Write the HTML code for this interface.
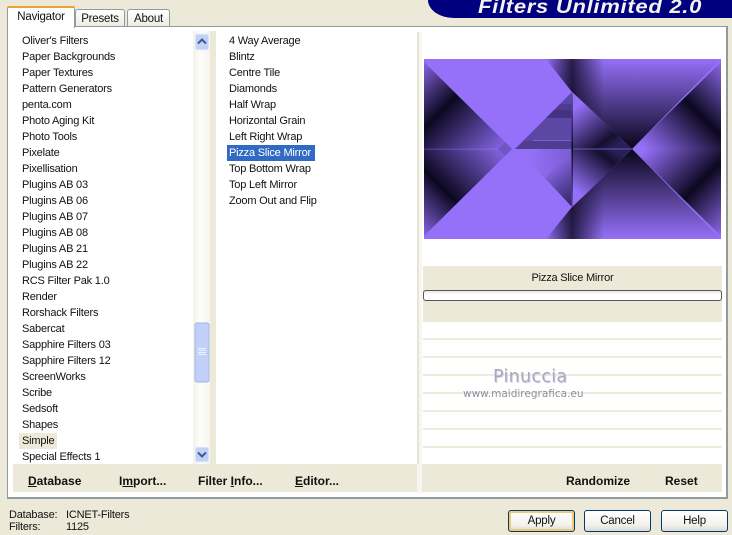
<!DOCTYPE html>
<html><head><meta charset="utf-8"><style>
html,body{margin:0;padding:0}
body{width:732px;height:535px;overflow:hidden;background:#ece9d8;position:relative;font-family:"Liberation Sans",sans-serif;font-size:11px;letter-spacing:-.2px;color:#111}
.a{position:absolute}
.r{position:absolute;white-space:nowrap;line-height:16px;height:16px}
.b{position:absolute;font-weight:bold;font-size:12px;letter-spacing:0;white-space:nowrap;line-height:16px;top:474px}
.l{position:absolute;left:423px;width:299px;height:2px;background:#efecdf}
.btn{position:absolute;top:510px;width:65px;height:20px;border:1px solid #003c74;border-radius:3px;background:linear-gradient(#fff,#f3f2ec 70%,#dcd8cc);text-align:center;line-height:20px;font-size:11.5px}
.tab{position:absolute;border:1px solid #919b9c;border-bottom:0;border-radius:3px 3px 0 0;background:linear-gradient(#fff,#ecebe0);text-align:center;font-size:11.5px}
</style></head><body>
<div class="a" style="left:428px;top:0;width:304px;height:18px;background:#00007f;border-radius:0 0 0 26px/0 0 0 18px"></div>
<div class="a" style="left:478px;top:-2px;font:italic bold 19px/20px 'Liberation Sans',sans-serif;color:#f4f4ee;white-space:nowrap;transform-origin:0 0;transform:scaleX(1.16);letter-spacing:.6px">Filters Unlimited 2.0</div>

<div class="tab" style="left:75px;top:9px;width:48px;height:17px;line-height:18px">Presets</div>
<div class="tab" style="left:127px;top:9px;width:41px;height:17px;line-height:18px">About</div>

<div class="a" style="left:7px;top:26px;width:718px;height:470px;border:1px solid #919b9c;border-right:2px solid #919b9c;border-bottom:2px solid #919b9c;background:#fff"></div>
<div class="a" style="left:7px;top:6px;width:66px;height:21px;background:#fff;border:1px solid #919b9c;border-bottom:0;border-radius:3px 3px 0 0;text-align:center;line-height:21px;font-size:11.5px"><div class="a" style="left:-1px;right:-1px;top:-1px;height:2px;background:#f0a030;border-radius:3px 3px 0 0"></div>Navigator</div>

<div class="a" style="left:210px;top:31px;width:6px;height:433px;background:#ece9d8"></div>
<div class="a" style="left:13px;top:464px;width:404px;height:28px;background:#ece9d8"></div>
<div class="a" style="left:422px;top:464px;width:300px;height:28px;background:#ece9d8"></div>
<div class="a" style="left:417px;top:32px;width:2px;height:432px;background:#e8e5d5"></div>
<div class="a" style="left:419px;top:32px;width:3px;height:461px;background:#f7f6f0"></div>
<div class="a" style="left:417px;top:464px;width:2px;height:29px;background:#f7f6f0"></div>

<div class="a" style="left:19px;top:433px;width:38px;height:16px;background:#ece9d8"></div>
<div class="a" style="left:227px;top:145px;width:88px;height:16px;background:#316ac5"></div>

<div class="r" style="left:22px;top:33px">Oliver's Filters</div>
<div class="r" style="left:22px;top:49px">Paper Backgrounds</div>
<div class="r" style="left:22px;top:65px">Paper Textures</div>
<div class="r" style="left:22px;top:81px">Pattern Generators</div>
<div class="r" style="left:22px;top:97px">penta.com</div>
<div class="r" style="left:22px;top:113px">Photo Aging Kit</div>
<div class="r" style="left:22px;top:129px">Photo Tools</div>
<div class="r" style="left:22px;top:145px">Pixelate</div>
<div class="r" style="left:22px;top:161px">Pixellisation</div>
<div class="r" style="left:22px;top:177px">Plugins AB 03</div>
<div class="r" style="left:22px;top:193px">Plugins AB 06</div>
<div class="r" style="left:22px;top:209px">Plugins AB 07</div>
<div class="r" style="left:22px;top:225px">Plugins AB 08</div>
<div class="r" style="left:22px;top:241px">Plugins AB 21</div>
<div class="r" style="left:22px;top:257px">Plugins AB 22</div>
<div class="r" style="left:22px;top:273px">RCS Filter Pak 1.0</div>
<div class="r" style="left:22px;top:289px">Render</div>
<div class="r" style="left:22px;top:305px">Rorshack Filters</div>
<div class="r" style="left:22px;top:321px">Sabercat</div>
<div class="r" style="left:22px;top:337px">Sapphire Filters 03</div>
<div class="r" style="left:22px;top:353px">Sapphire Filters 12</div>
<div class="r" style="left:22px;top:369px">ScreenWorks</div>
<div class="r" style="left:22px;top:385px">Scribe</div>
<div class="r" style="left:22px;top:401px">Sedsoft</div>
<div class="r" style="left:22px;top:417px">Shapes</div>
<div class="r" style="left:22px;top:433px">Simple</div>
<div class="r" style="left:22px;top:449px">Special Effects 1</div>

<div class="r" style="left:229px;top:33px">4 Way Average</div>
<div class="r" style="left:229px;top:49px">Blintz</div>
<div class="r" style="left:229px;top:65px">Centre Tile</div>
<div class="r" style="left:229px;top:81px">Diamonds</div>
<div class="r" style="left:229px;top:97px">Half Wrap</div>
<div class="r" style="left:229px;top:113px">Horizontal Grain</div>
<div class="r" style="left:229px;top:129px">Left Right Wrap</div>
<div class="r" style="left:229px;top:145px;color:#fff">Pizza Slice Mirror</div>
<div class="r" style="left:229px;top:161px">Top Bottom Wrap</div>
<div class="r" style="left:229px;top:177px">Top Left Mirror</div>
<div class="r" style="left:229px;top:193px">Zoom Out and Flip</div>

<!-- scrollbar -->
<div class="a" style="left:193px;top:31px;width:17px;height:433px;background:linear-gradient(90deg,#f3f1e8,#fdfdfa 40%,#f6f5ee)"></div>
<svg class="a" style="left:193px;top:31px" width="17" height="433" viewBox="0 0 17 433">
<rect x="2" y="3" width="14" height="16" rx="2" fill="#c1d2f8" stroke="#eef3fe"/>
<path d="M5 12.500L9 8.500L13 12.500" fill="none" stroke="#3f5a8c" stroke-width="2"/>
<rect x="2" y="292" width="14" height="59" rx="2" fill="#c0d0f8" stroke="#9fb6ea"/>
<path d="M5 317.500h8M5 319.500h8M5 321.500h8M5 323.500h8" stroke="#eef3fe" stroke-width="1"/>
<rect x="2" y="416" width="14" height="15" rx="2" fill="#c1d2f8" stroke="#eef3fe"/>
<path d="M5 421.500L9 425.500L13 421.500" fill="none" stroke="#3f5a8c" stroke-width="2"/>
</svg>

<!-- preview image -->
<svg class="a" style="left:424px;top:59px" width="297" height="180" viewBox="424 59 297 180">
<defs>
<linearGradient id="lu" gradientUnits="userSpaceOnUse" x1="505" y1="149" x2="420" y2="64"><stop offset="0" stop-color="#8a68e8"/><stop offset=".2" stop-color="#5f49a8"/><stop offset=".6" stop-color="#0c0820"/><stop offset="1" stop-color="#8a68e8"/></linearGradient>
<linearGradient id="ld" gradientUnits="userSpaceOnUse" x1="505" y1="149" x2="420" y2="234"><stop offset="0" stop-color="#8a68e8"/><stop offset=".2" stop-color="#5f49a8"/><stop offset=".6" stop-color="#0c0820"/><stop offset="1" stop-color="#8a68e8"/></linearGradient>
<linearGradient id="ru" gradientUnits="userSpaceOnUse" x1="645" y1="149" x2="726" y2="68"><stop offset="0" stop-color="#9570f8"/><stop offset=".55" stop-color="#0c0820"/><stop offset="1" stop-color="#8a68e8"/></linearGradient>
<linearGradient id="rd" gradientUnits="userSpaceOnUse" x1="645" y1="149" x2="726" y2="230"><stop offset="0" stop-color="#9570f8"/><stop offset=".55" stop-color="#0c0820"/><stop offset="1" stop-color="#8a68e8"/></linearGradient>
<linearGradient id="tv" gradientUnits="userSpaceOnUse" x1="0" y1="59" x2="0" y2="146"><stop offset="0" stop-color="#9570f8"/><stop offset="1" stop-color="#0c0820"/></linearGradient>
<linearGradient id="bv" gradientUnits="userSpaceOnUse" x1="0" y1="239" x2="0" y2="152"><stop offset="0" stop-color="#9570f8"/><stop offset="1" stop-color="#0c0820"/></linearGradient>
<linearGradient id="hd" gradientUnits="userSpaceOnUse" x1="546" y1="0" x2="604" y2="0"><stop offset="0" stop-color="#0c0820" stop-opacity="0"/><stop offset=".45" stop-color="#0c0820" stop-opacity=".8"/><stop offset="1" stop-color="#0c0820" stop-opacity="0"/></linearGradient>
<linearGradient id="mu" gradientUnits="userSpaceOnUse" x1="578" y1="106" x2="612" y2="150"><stop offset="0" stop-color="#9570f8"/><stop offset=".8" stop-color="#14102e"/><stop offset="1" stop-color="#2a2058"/></linearGradient>
<linearGradient id="md" gradientUnits="userSpaceOnUse" x1="578" y1="192" x2="612" y2="148"><stop offset="0" stop-color="#9570f8"/><stop offset=".8" stop-color="#14102e"/><stop offset="1" stop-color="#2a2058"/></linearGradient>
<linearGradient id="ll" gradientUnits="userSpaceOnUse" x1="552" y1="168" x2="572" y2="205"><stop offset="0" stop-color="#2a2058" stop-opacity="0"/><stop offset="1" stop-color="#2a2058" stop-opacity=".9"/></linearGradient>
<linearGradient id="ls" gradientUnits="userSpaceOnUse" x1="530" y1="0" x2="572" y2="0"><stop offset="0" stop-color="#9570f8"/><stop offset="1" stop-color="#7a5cd0"/></linearGradient>
<linearGradient id="vl" x1="0" y1="0" x2="0" y2="1"><stop offset="0" stop-color="#6a55bc"/><stop offset=".5" stop-color="#0c0820"/><stop offset="1" stop-color="#6a55bc"/></linearGradient>
<linearGradient id="cl" gradientUnits="userSpaceOnUse" x1="424" y1="0" x2="505" y2="0"><stop offset="0" stop-color="#5c48a8" stop-opacity=".5"/><stop offset="1" stop-color="#9570f8" stop-opacity=".6"/></linearGradient>
</defs>
<rect x="424" y="59" width="297" height="180" fill="#9570f8"/>
<polygon points="530,149 572,149 572,207 530,163" fill="url(#ls)"/>
<polygon points="424,62 512,149 424,149" fill="url(#lu)"/>
<polygon points="424,236 512,149 424,149" fill="url(#ld)"/>
<polygon points="632,149 721,62 721,149" fill="url(#ru)"/>
<polygon points="632,149 721,236 721,149" fill="url(#rd)"/>
<polygon points="546,59 721,59 632,149 572,92" fill="url(#tv)"/>
<polygon points="546,59 604,59 604,120 572,92" fill="url(#hd)"/>
<polygon points="546,239 721,239 632,149 572,207" fill="url(#bv)"/>
<polygon points="546,239 604,239 604,178 572,207" fill="url(#hd)"/>
<polygon points="572,92 632,149 572,149" fill="url(#mu)"/>
<polygon points="572,207 632,149 572,149" fill="url(#md)"/>
<polygon points="545,178 572,150 572,207" fill="url(#ll)"/>
<polygon points="515,149 572,92 572,149" fill="#5b47a4"/>
<polygon points="554,110 572,110 572,104 560,104" fill="#4e3a91"/>
<polygon points="546,118 572,118 572,110 554,110" fill="#443282"/>
<rect x="533" y="140" width="39" height="1" fill="#7a62d4"/>
<polygon points="524,141 572,141 572,149 515,149" fill="#4f3d92"/>
<rect x="424" y="148.500" width="75" height="1.500" fill="url(#cl)"/>
<rect x="572" y="148.500" width="60" height="1" fill="#6a55bc"/>
<polygon points="505,142 512,149 505,156 498,149" fill="#6f58c4"/>
<rect x="571.500" y="92" width="1.500" height="115" fill="url(#vl)"/>
</svg>

<!-- right panel -->
<div class="a" style="left:423px;top:266px;width:299px;height:56px;background:#ece9d8"></div>
<div class="a" style="left:423px;top:270px;width:299px;text-align:center;line-height:16px">Pizza Slice Mirror</div>
<div class="a" style="left:423px;top:290px;width:297px;height:9px;border:1px solid #555;border-radius:3px;background:linear-gradient(#e8e8e4,#fff 40%,#fff)"></div>
<div class="l" style="top:338px"></div>
<div class="l" style="top:356px"></div>
<div class="l" style="top:374px"></div>
<div class="l" style="top:392px"></div>
<div class="l" style="top:410px"></div>
<div class="l" style="top:428px"></div>
<div class="l" style="top:446px"></div>
<div class="a" style="left:493px;top:366px;font:17.500px/22px 'DejaVu Sans',sans-serif;color:#a8a8c2;white-space:nowrap;letter-spacing:.3px;text-shadow:1px 1px 0 #d8d8e2">Pinuccia</div>
<div class="a" style="left:463px;top:387px;font:10.500px/14px 'DejaVu Sans',sans-serif;color:#8f8fa0;white-space:nowrap;letter-spacing:0">www.maidiregrafica.eu</div>

<div class="b" style="left:28px;top:473px"><u>D</u>atabase</div>
<div class="b" style="left:119px;top:473px">I<u>m</u>port...</div>
<div class="b" style="left:198px;top:473px">Filter <u>I</u>nfo...</div>
<div class="b" style="left:295px;top:473px"><u>E</u>ditor...</div>
<div class="b" style="left:566px;top:473px">Randomize</div>
<div class="b" style="left:665px;top:473px">Reset</div>

<div class="r" style="left:9px;top:507px">Database:</div>
<div class="r" style="left:66px;top:507px">ICNET-Filters</div>
<div class="r" style="left:9px;top:519px">Filters:</div>
<div class="r" style="left:66px;top:519px">1125</div>

<div class="btn" style="left:508px;box-shadow:inset 0 0 0 2px #f5c878">Apply</div>
<div class="btn" style="left:584px">Cancel</div>
<div class="btn" style="left:661px">Help</div>
</body></html>
